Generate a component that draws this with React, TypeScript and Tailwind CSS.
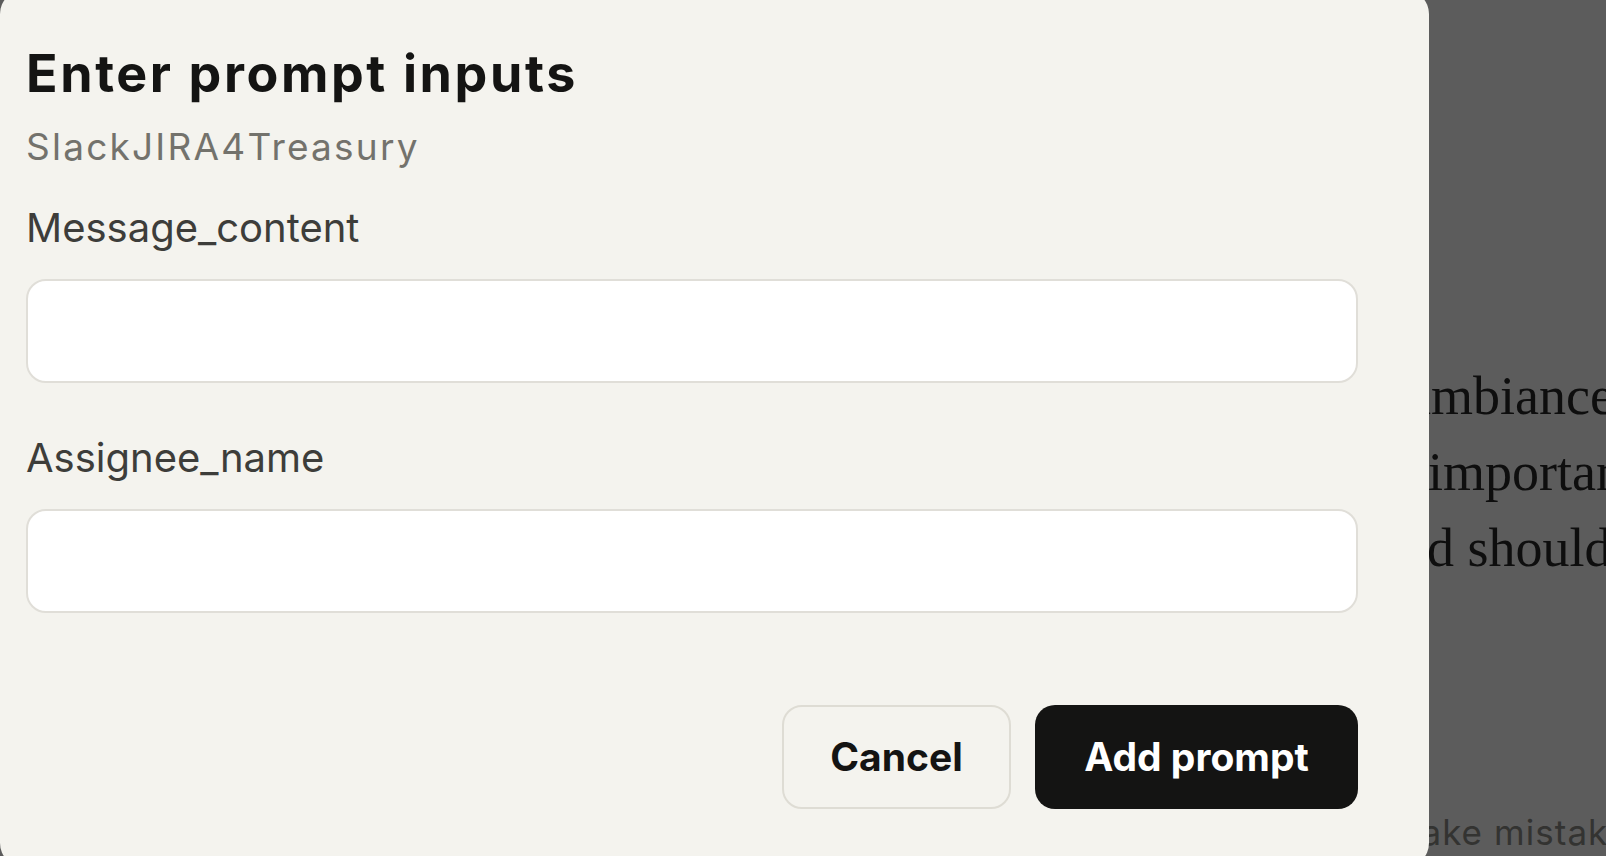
import { useState } from 'react';

const sans = "font-['Inter','Noto_Sans',sans-serif]";

function Field({ label, value, onChange }: { label: string; value: string; onChange: (v: string) => void }) {
  return (
    <div className="flex flex-col">
      <label className="text-[40px] leading-[48px] text-[#3d3d3a]">{label}</label>
      <input
        value={value}
        onChange={(e) => onChange(e.target.value)}
        className="mt-[27px] h-[104px] w-full rounded-[20px] border-2 border-[#e0ded8] bg-white px-6 text-[36px] outline-none"
      />
    </div>
  );
}

export default function App() {
  const [message, setMessage] = useState('');
  const [assignee, setAssignee] = useState('');

  return (
    <div className="relative h-[856px] w-[1606px] overflow-hidden bg-[#5c5c5c]">
      {/* Page behind the dialog (dimmed) */}
      <div className="flex flex-col pt-[358px] font-['Liberation_Serif',serif] text-[54px] leading-[76px] text-[#0e0e0e] whitespace-nowrap">
        <div className="pl-[1407px]">ambiance and the</div>
        <div className="pl-[1428px]">important to note</div>
        <div className="pl-[1376px]">and should be</div>
      </div>
      <div className={`${sans} absolute left-[1315px] top-[808px] whitespace-nowrap text-[35px] leading-[48px] tracking-[0.03em] text-[#333331]`}>
        can make mistakes
      </div>

      {/* Dialog */}
      <div className={`${sans} absolute left-0 top-[-10px] flex h-[877px] w-[1429px] flex-col rounded-[24px] bg-[#f4f3ee] pl-[26px] pr-[71px] pt-[54px]`}>
        <h2 className="text-[52px] font-bold leading-[60px] tracking-[0.05em] text-[#141413]">Enter prompt inputs</h2>
        <p className="mt-[21px] text-[37px] leading-[44px] tracking-[0.06em] text-[#73726c]">SlackJIRA4Treasury</p>

        <div className="mt-[35px]">
          <Field label="Message_content" value={message} onChange={setMessage} />
        </div>
        <div className="mt-[51px]">
          <Field label="Assignee_name" value={assignee} onChange={setAssignee} />
        </div>

        <div className="mt-[92px] flex justify-end gap-[24px]">
          <button className="h-[104px] w-[229px] rounded-[20px] border-2 border-[#dedcd4] text-[39px] font-bold text-[#141413]">
            Cancel
          </button>
          <button className="h-[104px] w-[323px] rounded-[20px] bg-[#141413] text-[39px] font-bold text-white">
            Add prompt
          </button>
        </div>
      </div>
    </div>
  );
}
